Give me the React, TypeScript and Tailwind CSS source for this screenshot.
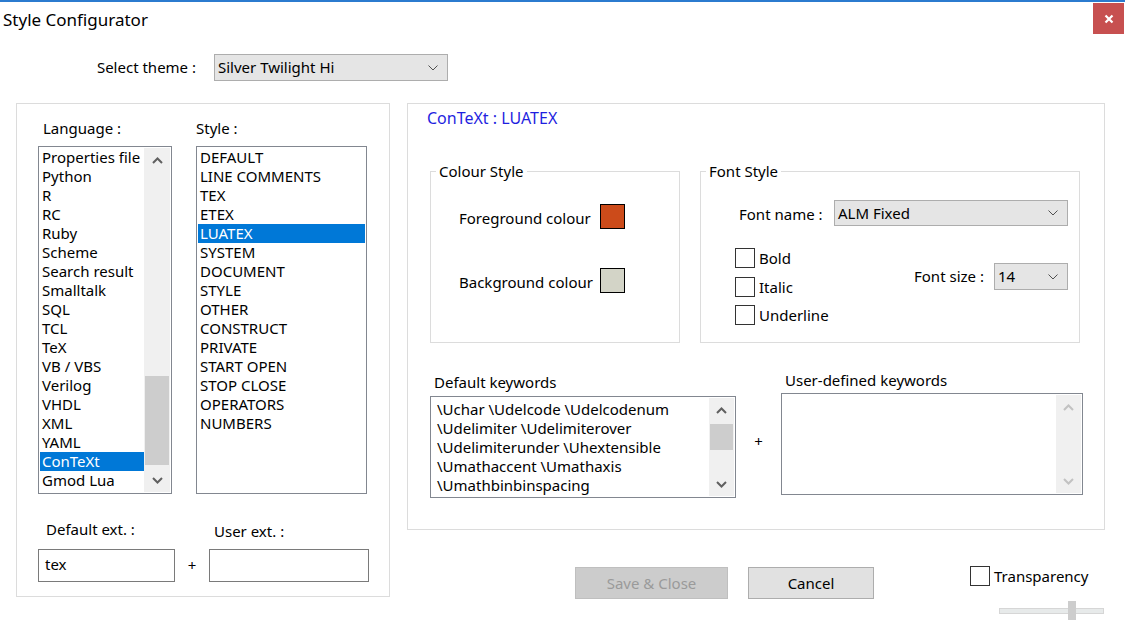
import React from 'react'

const languages = [
  'Properties file',
  'Python',
  'R',
  'RC',
  'Ruby',
  'Scheme',
  'Search result',
  'Smalltalk',
  'SQL',
  'TCL',
  'TeX',
  'VB / VBS',
  'Verilog',
  'VHDL',
  'XML',
  'YAML',
  'ConTeXt',
  'Gmod Lua',
]

const styles = [
  'DEFAULT',
  'LINE COMMENTS',
  'TEX',
  'ETEX',
  'LUATEX',
  'SYSTEM',
  'DOCUMENT',
  'STYLE',
  'OTHER',
  'CONSTRUCT',
  'PRIVATE',
  'START OPEN',
  'STOP CLOSE',
  'OPERATORS',
  'NUMBERS',
]

const keywords = [
  '\\Uchar \\Udelcode \\Udelcodenum',
  '\\Udelimiter \\Udelimiterover',
  '\\Udelimiterunder \\Uhextensible',
  '\\Umathaccent \\Umathaxis',
  '\\Umathbinbinspacing',
]

const Chevron = ({ up = false, color = '#606060' }: { up?: boolean; color?: string }) => (
  <svg width="11" height="7" viewBox="0 0 11 7">
    <polyline
      points={up ? '1,6 5.5,1.5 10,6' : '1,1 5.5,5.5 10,1'}
      fill="none"
      stroke={color}
      strokeWidth="2"
    />
  </svg>
)

const ComboArrow = () => (
  <svg width="10" height="6" viewBox="0 0 10 6">
    <polyline points="0.5,0.5 5,5 9.5,0.5" fill="none" stroke="#505050" strokeWidth="1" />
  </svg>
)

const ScrollBar = ({
  thumb,
  disabled = false,
  width = 'w-[25px]',
}: {
  thumb?: string
  disabled?: boolean
  width?: string
}) => {
  const c = disabled ? '#c2c2c2' : '#606060'
  return (
    <div className={`flex flex-col bg-[#f0f0f0] ${width}`}>
      <div className="flex h-[24px] items-center justify-center">
        <Chevron up color={c} />
      </div>
      <div className="flex-1">{thumb && <div className={`mx-px bg-[#cdcdcd] ${thumb}`} />}</div>
      <div className="flex h-[24px] items-center justify-center">
        <Chevron color={c} />
      </div>
    </div>
  )
}

const Item = ({ text, selected }: { text: string; selected: boolean }) => (
  <div
    className={`h-[19px] whitespace-nowrap pl-[2px] leading-[19px] ${
      selected ? 'bg-[#0078d7] text-white' : ''
    }`}
  >
    {text}
  </div>
)

const Combo = ({ text, className }: { text: string; className: string }) => (
  <div
    className={`flex items-center justify-between border border-[#adadad] bg-[#e5e5e5] pl-[3px] pr-[9px] ${className}`}
  >
    <span>{text}</span>
    <ComboArrow />
  </div>
)

const CheckBox = () => <div className="h-[20px] w-[20px] border border-[#333333] bg-white" />

export default function App() {
  return (
    <div className="h-[621px] w-[1125px] overflow-hidden bg-white text-[15px] text-black [font-family:'Noto_Sans','Open_Sans',sans-serif]">
      <div className="h-[2px] bg-[#2b7bcf]" />

      {/* title bar */}
      <div className="flex h-[34px] items-start justify-between">
        <span className="mt-[8px] pl-[3px] text-[17px] leading-[20px]">Style Configurator</span>
        <div className="mr-px mt-px flex h-[31px] w-[31px] items-center justify-center bg-[#c75050]">
          <svg width="10" height="10" viewBox="0 0 10 10">
            <path d="M1.5 1.5 L8.5 8.5 M8.5 1.5 L1.5 8.5" stroke="white" strokeWidth="2.2" />
          </svg>
        </div>
      </div>

      {/* theme */}
      <div className="mt-[18px] flex items-center">
        <span className="w-[196px] text-right">Select theme :</span>
        <Combo text="Silver Twilight Hi" className="ml-[18px] h-[27px] w-[234px]" />
      </div>

      <div className="mt-[22px] flex pl-[16px]">
        {/* left panel */}
        <div className="h-[494px] w-[374px] border border-[#dcdcdc] pl-[21px] pt-[14px]">
          <div className="flex">
            <div className="w-[134px]">
              <div className="pl-[5px] leading-[20px]">Language :</div>
              <div className="mt-[8px] flex h-[348px] border border-[#828790] p-px">
                <div className="flex-1 overflow-hidden">
                  {languages.map((l) => (
                    <Item key={l} text={l} selected={l === 'ConTeXt'} />
                  ))}
                </div>
                <ScrollBar thumb="mt-[204px] h-[89px]" width="w-[26px]" />
              </div>
            </div>
            <div className="ml-[24px] w-[171px]">
              <div className="leading-[20px]">Style :</div>
              <div className="mt-[8px] h-[348px] border border-[#828790] p-px">
                {styles.map((s) => (
                  <Item key={s} text={s} selected={s === 'LUATEX'} />
                ))}
              </div>
            </div>
          </div>

          <div className="mt-[25px] flex">
            <div className="w-[171px] pl-[8px] leading-[20px]">Default ext. :</div>
            <div className="mt-[2px] pl-[5px] leading-[20px]">User ext. :</div>
          </div>
          <div className="mt-[8px] flex items-center">
            <div className="h-[33px] w-[137px] border border-[#7a7a7a] pl-[6px] leading-[28px]">tex</div>
            <span className="w-[34px] text-center">+</span>
            <div className="h-[33px] w-[160px] border border-[#7a7a7a]" />
          </div>
        </div>

        {/* right column */}
        <div className="ml-[17px] w-[698px]">
          <div className="h-[427px] border border-[#dcdcdc]">
            <div className="pl-[19px] pt-[4px] text-[16px] leading-[20px] text-[#1f1fe0]">ConTeXt : LUATEX</div>

            <div className="mt-[33px] flex pl-[22px]">
              <fieldset className="h-[182px] w-[250px] border border-[#dcdcdc]">
                <legend className="ml-[5px] px-[3px] leading-[20px]">Colour Style</legend>
                <div className="pl-[28px] pt-[23px]">
                  <div className="flex h-[25px] items-center">
                    <span className="w-[141px] pt-[3px]">Foreground colour</span>
                    <div className="h-[25px] w-[25px] border border-black bg-[#cc4b1a]" />
                  </div>
                  <div className="mt-[39px] flex h-[25px] items-center">
                    <span className="w-[141px] pt-[3px]">Background colour</span>
                    <div className="h-[25px] w-[25px] border border-black bg-[#d3d4c7]" />
                  </div>
                </div>
              </fieldset>

              <fieldset className="ml-[20px] h-[182px] w-[380px] border border-[#dcdcdc]">
                <legend className="ml-[5px] px-[3px] leading-[20px]">Font Style</legend>
                <div className="mt-[19px] flex items-center pl-[38px]">
                  <span className="w-[95px] pt-[3px]">Font name :</span>
                  <Combo text="ALM Fixed" className="h-[26px] w-[234px]" />
                </div>
                <div className="mt-[22px] flex pl-[34px]">
                  <div className="w-[179px]">
                    <label className="flex h-[20px] items-center gap-[4px]">
                      <CheckBox />
                      Bold
                    </label>
                    <label className="mt-[9px] flex h-[20px] items-center gap-[4px]">
                      <CheckBox />
                      Italic
                    </label>
                    <label className="mt-[8px] flex h-[20px] items-center gap-[4px]">
                      <CheckBox />
                      Underline
                    </label>
                  </div>
                  <div className="mt-[15px] flex h-[27px] items-center">
                    <span className="w-[80px]">Font size :</span>
                    <Combo text="14" className="h-[27px] w-[74px]" />
                  </div>
                </div>
              </fieldset>
            </div>

            <div className="mt-[27px] flex pl-[22px]">
              <div className="w-[306px]">
                <div className="mt-[2px] pl-[4px] leading-[20px]">Default keywords</div>
                <div className="mt-[4px] flex h-[102px] border border-[#828790] p-px">
                  <div className="flex-1 overflow-hidden pl-[5px] pt-[2px]">
                    {keywords.map((k) => (
                      <div key={k} className="h-[19px] whitespace-nowrap leading-[19px]">
                        {k}
                      </div>
                    ))}
                  </div>
                  <ScrollBar thumb="mt-[2px] h-[26px]" />
                </div>
              </div>
              <div className="w-[45px] pt-[61px] text-center leading-[20px]">+</div>
              <div className="w-[302px]">
                <div className="pl-[4px] leading-[20px]">User-defined keywords</div>
                <div className="mt-[3px] flex h-[102px] justify-end border border-[#828790] p-px">
                  <ScrollBar disabled />
                </div>
              </div>
            </div>
          </div>

          {/* buttons */}
          <div className="mt-[37px] flex items-start pl-[168px]">
            <div className="flex h-[32px] w-[153px] items-center justify-center border border-[#bfbfbf] bg-[#cccccc] text-[#9a9a9a]">
              Save &amp; Close
            </div>
            <div className="ml-[20px] flex h-[32px] w-[126px] items-center justify-center border border-[#adadad] bg-[#e1e1e1]">
              Cancel
            </div>
            <div className="ml-[96px] -mt-px">
              <label className="flex h-[20px] items-center gap-[4px]">
                <CheckBox />
                Transparency
              </label>
              <div className="relative ml-[29px] mt-[15px] h-[19px] w-[105px]">
                <div className="absolute left-0 right-0 top-[7px] h-[6px] border border-[#d6d6d6] bg-[#e7eaea]" />
                <div className="absolute left-[69px] top-0 h-[19px] w-[8px] bg-[#cdcdcd]" />
              </div>
            </div>
          </div>
        </div>
      </div>
    </div>
  )
}
